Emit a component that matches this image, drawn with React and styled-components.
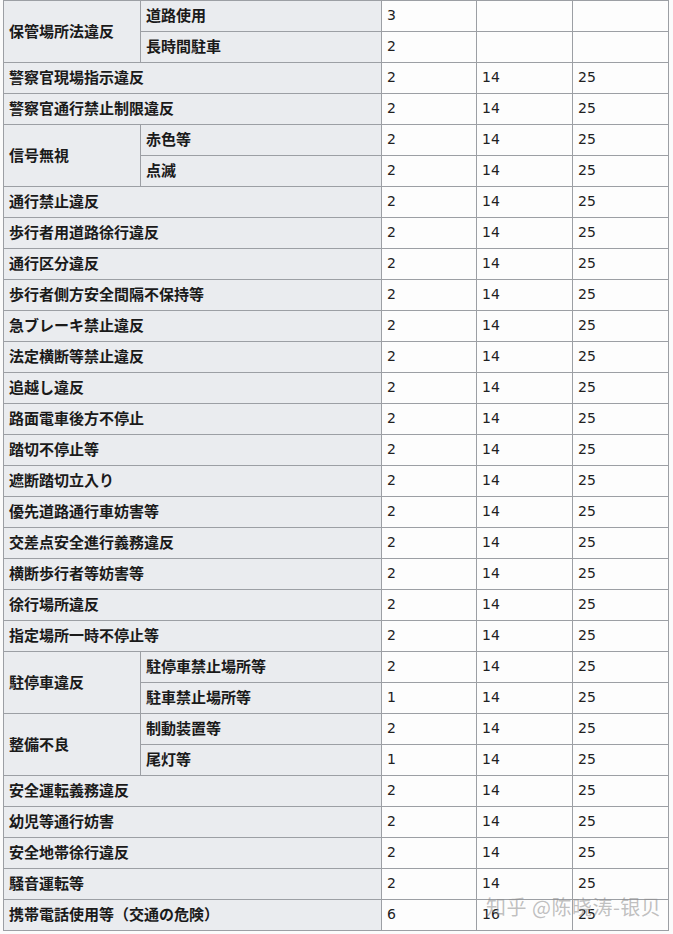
import React from 'react'
import styled, {createGlobalStyle} from 'styled-components'

const GlobalStyle = createGlobalStyle`
  html, body {
    margin: 0;
    padding: 0;
    background: #ffffff;
  }
  body {
    font-family: "Noto Sans CJK JP", "DejaVu Sans", sans-serif;
    color: #202122;
  }
`;

const Page = styled.div`
  position: relative;
  width: 673px;
  height: 934px;
  overflow: hidden;
  padding: 0 0 0 3px;
  box-sizing: border-box;
  background: #fbfbfb;
`;

const Table = styled.table`
  width: 665px;
  table-layout: fixed;
  border-collapse: collapse;
  background: #fdfdfd;
  border: 1px solid #9c9fa4;
`;

const Col = styled.col`
  width: ${props => props.w}px;
`;

const Row = styled.tr`
  height: 31px;
`;

const Head = styled.th`
  border: 1px solid #9c9fa4;
  background: #eaecef;
  text-align: left;
  padding: 0 5px 2px;
  font-family: "Noto Sans CJK JP", sans-serif;
  font-size: 15px;
  font-weight: 700;
  line-height: 20px;
  white-space: nowrap;
  color: #1a1a1a;
`;

const Cell = styled.td`
  border: 1px solid #9c9fa4;
  padding: 0 5px 2px;
  font-family: "DejaVu Sans", "Noto Sans CJK JP", sans-serif;
  font-size: 14px;
  line-height: 20px;
  color: #202122;
`;

const Watermark = styled.div`
  position: absolute;
  left: 486px;
  top: 892px;
  font-family: "Noto Sans CJK SC", sans-serif;
  font-size: 20px;
  letter-spacing: 0.5px;
  color: rgba(140, 140, 140, 0.55);
  white-space: nowrap;
  pointer-events: none;
`;

const rows = [
  {group: '保管場所法違反', span: 2, label: '道路使用', v: ['3', '', '']},
  {label: '長時間駐車', v: ['2', '', '']},
  {full: '警察官現場指示違反', v: ['2', '14', '25']},
  {full: '警察官通行禁止制限違反', v: ['2', '14', '25']},
  {group: '信号無視', span: 2, label: '赤色等', v: ['2', '14', '25']},
  {label: '点滅', v: ['2', '14', '25']},
  {full: '通行禁止違反', v: ['2', '14', '25']},
  {full: '歩行者用道路徐行違反', v: ['2', '14', '25']},
  {full: '通行区分違反', v: ['2', '14', '25']},
  {full: '歩行者側方安全間隔不保持等', v: ['2', '14', '25']},
  {full: '急ブレーキ禁止違反', v: ['2', '14', '25']},
  {full: '法定横断等禁止違反', v: ['2', '14', '25']},
  {full: '追越し違反', v: ['2', '14', '25']},
  {full: '路面電車後方不停止', v: ['2', '14', '25']},
  {full: '踏切不停止等', v: ['2', '14', '25']},
  {full: '遮断踏切立入り', v: ['2', '14', '25']},
  {full: '優先道路通行車妨害等', v: ['2', '14', '25']},
  {full: '交差点安全進行義務違反', v: ['2', '14', '25']},
  {full: '横断歩行者等妨害等', v: ['2', '14', '25']},
  {full: '徐行場所違反', v: ['2', '14', '25']},
  {full: '指定場所一時不停止等', v: ['2', '14', '25']},
  {group: '駐停車違反', span: 2, label: '駐停車禁止場所等', v: ['2', '14', '25']},
  {label: '駐車禁止場所等', v: ['1', '14', '25']},
  {group: '整備不良', span: 2, label: '制動装置等', v: ['2', '14', '25']},
  {label: '尾灯等', v: ['1', '14', '25']},
  {full: '安全運転義務違反', v: ['2', '14', '25']},
  {full: '幼児等通行妨害', v: ['2', '14', '25']},
  {full: '安全地帯徐行違反', v: ['2', '14', '25']},
  {full: '騒音運転等', v: ['2', '14', '25']},
  {full: '携帯電話使用等（交通の危険）', v: ['6', '16', '25']},
];

const widths = [137, 241, 95, 96, 96];

export default function App() {
  return (
    <Page>
      <GlobalStyle/>
      <Table>
        <colgroup>
          {widths.map((w, i) => <Col key={i} w={w}/>)}
        </colgroup>
        <tbody>
          {rows.map((r, idx) => (
            <Row key={idx}>
              {r.full && <Head colSpan={2}>{r.full}</Head>}
              {r.group && <Head rowSpan={r.span}>{r.group}</Head>}
              {r.label && <Head>{r.label}</Head>}
              {r.v.map((n, i) => <Cell key={i}>{n}</Cell>)}
            </Row>
          ))}
        </tbody>
      </Table>
      <Watermark>知乎 @陈晓涛-银贝</Watermark>
    </Page>
  );
}
